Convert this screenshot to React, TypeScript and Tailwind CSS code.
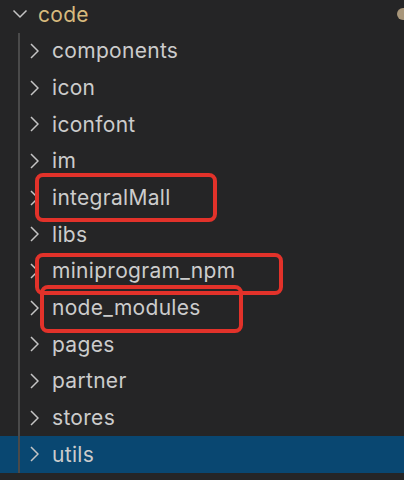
import React from 'react';

const FOLDERS = [
  'components',
  'icon',
  'iconfont',
  'im',
  'integralMall',
  'libs',
  'miniprogram_npm',
  'node_modules',
  'pages',
  'partner',
  'stores',
  'utils',
];

const Chevron = ({ open }: { open?: boolean }) =>
  open ? (
    <svg width="16" height="10" viewBox="0 0 16 10" className="shrink-0">
      <path d="M1.5 1.5 L8 8 L14.5 1.5" fill="none" stroke="#c5c5c5" strokeWidth="1.5" />
    </svg>
  ) : (
    <svg width="9" height="16" viewBox="0 0 9 16" className="shrink-0">
      <path d="M1 1 L8 8 L1 15" fill="none" stroke="#c5c5c5" strokeWidth="1.5" />
    </svg>
  );

export default function App() {
  return (
    <div
      className="relative w-[404px] h-[480px] overflow-hidden bg-[#252526] text-[#cccccc]"
      style={{ fontFamily: 'Inter, "Noto Sans", sans-serif' }}
    >
      <div className="-mt-[4px]">
        {/* root folder */}
        <div className="flex items-center h-[36.67px] pl-[12px] pr-[3px]">
          <Chevron open />
          <span className="ml-[10px] text-[21px] tracking-[0.3px] leading-none text-[#d7ba7d]">code</span>
          <span className="ml-auto w-[12px] h-[12px] rounded-full bg-[#a8967a] translate-x-[8px]" />
        </div>

        <div className="relative">
          <div className="absolute left-[18px] top-0 bottom-0 w-[2px] bg-[#4a4a4a]" />
          {FOLDERS.map((name) => (
            <div
              key={name}
              className={`flex items-center h-[36.67px] pl-[30px] ${name === 'utils' ? 'bg-[#094771]' : ''}`}
            >
              <Chevron />
              <span className="ml-[13px] text-[21px] tracking-[0.3px] leading-none">{name}</span>
            </div>
          ))}
        </div>
      </div>

      {/* red annotation boxes */}
      <div className="absolute left-[35px] top-[173px] w-[182px] h-[49px] rounded-[8px] border-[4px] border-[#e2322a]" />
      <div className="absolute left-[35px] top-[253px] w-[248px] h-[42px] rounded-[8px] border-[4px] border-[#e2322a]" />
      <div className="absolute left-[40px] top-[285px] w-[203px] h-[48px] rounded-[8px] border-[4px] border-[#e2322a]" />
    </div>
  );
}
